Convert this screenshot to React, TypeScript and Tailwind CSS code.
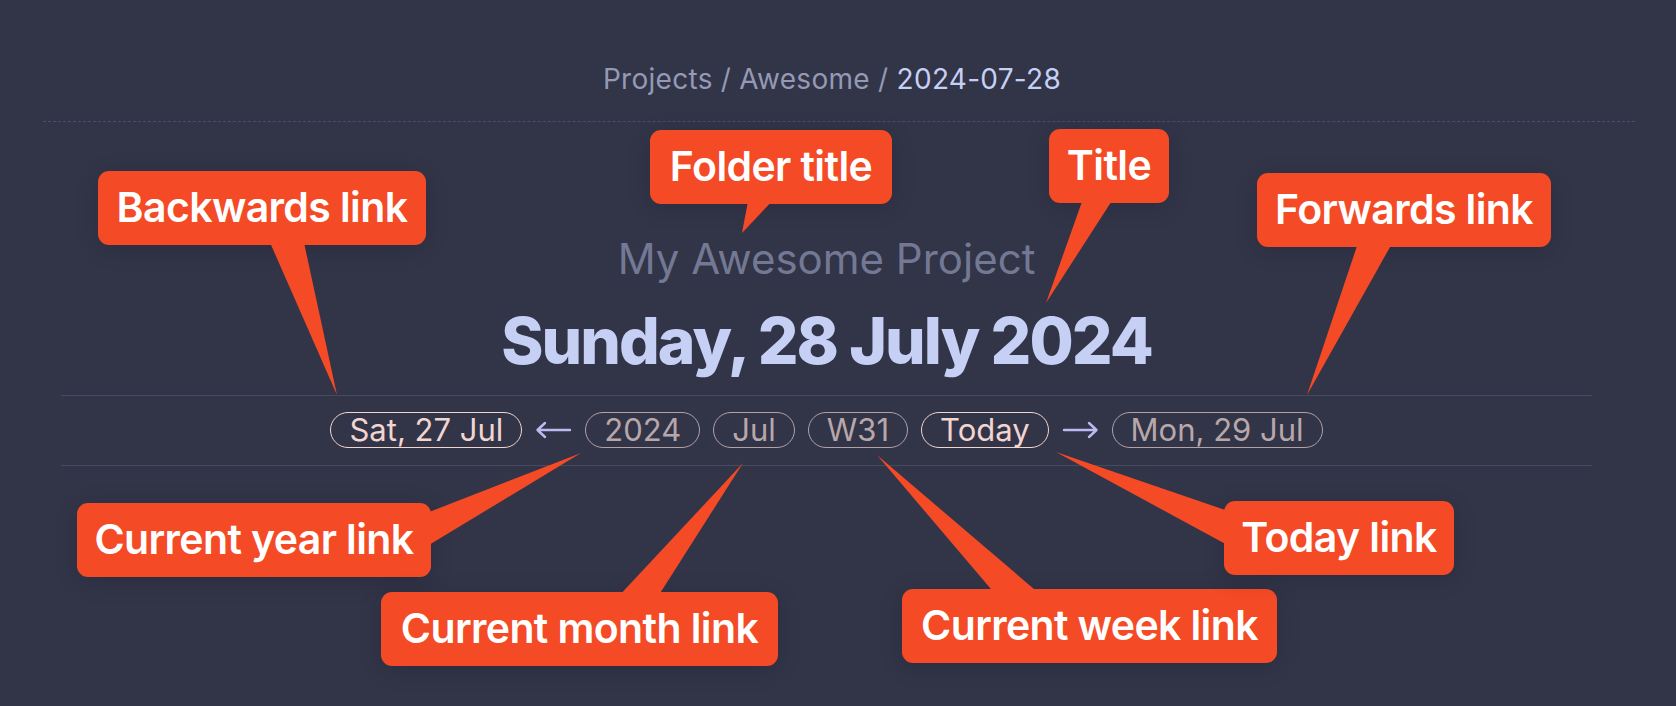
import { ReactNode } from 'react';

interface Callout {
  label: string;
  left: number;
  top: number;
  width: number;
  tail: string;
}

// annotation bubbles, laid over the page
const callouts: Callout[] = [
  { label: 'Backwards link', left: 98, top: 171, width: 328, tail: '268,238 303,238 337,395' },
  { label: 'Folder title', left: 650, top: 130, width: 242, tail: '749,196 777,196 742,233' },
  { label: 'Title', left: 1049, top: 129, width: 120, tail: '1084,196 1115,196 1046,303' },
  { label: 'Forwards link', left: 1257, top: 173, width: 294, tail: '1359,240 1394,240 1307,395' },
  { label: 'Current year link', left: 77, top: 503, width: 354, tail: '424,514 424,548 581,453' },
  { label: 'Current month link', left: 381, top: 592, width: 397, tail: '617,598 657,598 743,463' },
  { label: 'Current week link', left: 902, top: 589, width: 375, tail: '996,595 1041,595 877,455' },
  { label: 'Today link', left: 1224, top: 501, width: 230, tail: '1231,512 1231,547 1056,452' },
];

const Pill = ({ children, active }: { children: ReactNode; active?: boolean }) => (
  <span
    className={`rounded-full border-[1.5px] px-[18px] text-[31px] leading-[34px] ${
      active ? 'border-[#f2d5cf] text-[#f2d5cf]' : 'border-[#b3a2a5] text-[#b8a7a9]'
    }`}
  >
    {children}
  </span>
);

const Arrow = ({ dir }: { dir: 'left' | 'right' }) => (
  <svg width="37" height="18" viewBox="0 0 37 18" className="shrink-0">
    {dir === 'left' ? (
      <path d="M35 9H3M10 2L2.5 9L10 16" fill="none" stroke="#babbf1" strokeWidth="2.4" strokeLinecap="round" strokeLinejoin="round" />
    ) : (
      <path d="M2 9H34M27 2L34.5 9L27 16" fill="none" stroke="#babbf1" strokeWidth="2.4" strokeLinecap="round" strokeLinejoin="round" />
    )}
  </svg>
);

const App = () => {
  return (
    <div className="relative h-[706px] w-full overflow-hidden bg-[#323448] font-['Inter','Noto_Sans',sans-serif]">
      {/* Breadcrumb */}
      <div className="pr-[12px] pt-[61px] text-center text-[28px] leading-[36px] tracking-[0.01em] text-[#9499b5]">
        Projects / Awesome / <span className="text-[#c6d0f5]">2024-07-28</span>
      </div>
      <div className="ml-[43px] mr-[41px] mt-[24px] border-t border-dashed border-[#4b4f66]" />

      {/* Header */}
      <div className="ml-[61px] mr-[84px] flex flex-col items-center">
        <p className="mt-[113px] text-[42px] leading-[48px] text-[#737994]">My Awesome Project</p>
        <h1 className="mt-[22px] text-[64px] font-extrabold leading-[72px] tracking-[-0.03em] text-[#c6d0f5]">
          Sunday, 28 July 2024
        </h1>
        <div className="mt-[18px] flex w-full items-center justify-center gap-[13px] border-y border-[#464a5f] pb-[17px] pt-[16px]">
          <Pill active>Sat, 27 Jul</Pill>
          <Arrow dir="left" />
          <Pill>2024</Pill>
          <Pill>Jul</Pill>
          <Pill>W31</Pill>
          <Pill active>Today</Pill>
          <Arrow dir="right" />
          <Pill>Mon, 29 Jul</Pill>
        </div>
      </div>

      {/* Annotation bubbles */}
      {callouts.map(c => (
        <div
          key={c.label}
          className="absolute flex h-[74px] items-center justify-center rounded-[11px] bg-[#f44a26] text-[41px] font-semibold tracking-[-0.015em] text-white shadow-[0_4px_24px_rgba(0,0,0,0.14)]"
          style={{ left: c.left, top: c.top, width: c.width }}
        >
          {c.label}
        </div>
      ))}

      {/* Annotation tails */}
      <svg className="pointer-events-none absolute left-0 top-0" width="1676" height="706">
        {callouts.map(c => (
          <polygon key={c.label} points={c.tail} fill="#f44a26" />
        ))}
      </svg>
    </div>
  );
};

export default App;
